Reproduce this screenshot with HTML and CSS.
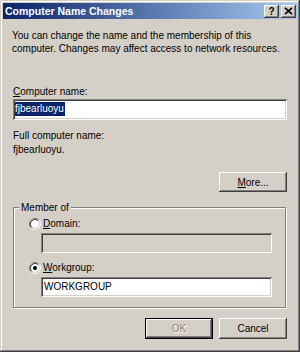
FILE: index.html
```html
<!DOCTYPE html>
<html>
<head>
<meta charset="utf-8">
<link rel="stylesheet" href="styles.css">
</head>
<body>
<div class="window">
  <div class="titlebar">
    <span class="title">Computer Name Changes</span>
    <div class="caption-btns">
      <span class="cbtn help">?</span>
      <span class="cbtn close">
        <svg width="9" height="8" viewBox="0 0 9 8"><path d="M1 0.8 L8 7.2 M8 0.8 L1 7.2" stroke="#000" stroke-width="1.7" fill="none"/></svg>
      </span>
    </div>
  </div>
  <div class="content">
    <p class="desc">You can change the name and the membership of this<br>computer. Changes may affect access to network resources.</p>
    <div class="lbl lbl-name"><u>C</u>omputer name:</div>
    <div class="input input-name"><span class="sel">fjbearluoyu</span></div>
    <div class="lbl lbl-full">Full computer name:</div>
    <div class="lbl lbl-fullval">fjbearluoyu.</div>
    <div class="more-row"><span class="btn"><u>M</u>ore...</span></div>
    <fieldset class="group">
      <legend class="legend">Member of</legend>
      <div class="radio-row">
        <svg class="radio" width="12" height="12" viewBox="0 0 12 12">
          <circle cx="6" cy="6" r="4.5" fill="#fff"/>
          <path d="M2.11 9.89 A5.5 5.5 0 0 1 9.89 2.11" stroke="#808080" fill="none"/>
          <path d="M9.89 2.11 A5.5 5.5 0 0 1 2.11 9.89" stroke="#fff" fill="none"/>
          <path d="M2.82 9.18 A4.5 4.5 0 0 1 9.18 2.82" stroke="#404040" fill="none"/>
          <path d="M9.18 2.82 A4.5 4.5 0 0 1 2.82 9.18" stroke="#d4d0c8" fill="none"/>
        </svg>
        <span><u>D</u>omain:</span>
      </div>
      <div class="input input-group input-disabled"></div>
      <div class="radio-row radio-row-wg">
        <svg class="radio" width="12" height="12" viewBox="0 0 12 12">
          <circle cx="6" cy="6" r="4.5" fill="#fff"/>
          <path d="M2.11 9.89 A5.5 5.5 0 0 1 9.89 2.11" stroke="#808080" fill="none"/>
          <path d="M9.89 2.11 A5.5 5.5 0 0 1 2.11 9.89" stroke="#fff" fill="none"/>
          <path d="M2.82 9.18 A4.5 4.5 0 0 1 9.18 2.82" stroke="#404040" fill="none"/>
          <path d="M9.18 2.82 A4.5 4.5 0 0 1 2.82 9.18" stroke="#d4d0c8" fill="none"/>
          <circle cx="6" cy="6" r="2" fill="#000"/>
        </svg>
        <span><u>W</u>orkgroup:</span>
      </div>
      <div class="input input-group input-wg">WORKGROUP</div>
    </fieldset>
    <div class="actions">
      <span class="btn btn-default btn-disabled">OK</span>
      <span class="btn">Cancel</span>
    </div>
  </div>
</div>
</body>
</html>
```
FILE: styles.css
```css
* { box-sizing: border-box; }
html, body { margin: 0; padding: 0; }
body {
  font-family: "Liberation Sans", Arial, sans-serif;
  font-size: 10px;
  line-height: 13px;
  color: #000;
  background: #d4d0c8;
}
.window {
  width: 300px;
  height: 352px;
  padding: 3px;
  background: #d4d0c8;
  box-shadow: inset -1px -1px #404040, inset 1px 1px #d4d0c8, inset -2px -2px #808080, inset 2px 2px #fff;
  display: flex;
  flex-direction: column;
}
.titlebar {
  height: 16px;
  background: linear-gradient(to right, #0a246a, #a6caf0);
  display: flex;
  align-items: center;
  justify-content: space-between;
  padding: 0 1px 0 2px;
}
.title {
  color: #fff;
  font-weight: bold;
  font-size: 10.5px;
}
.caption-btns {
  display: flex;
  gap: 2px;
}
.cbtn {
  width: 15px;
  height: 13px;
  background: #d4d0c8;
  box-shadow: inset -1px -1px #404040, inset 1px 1px #fff, inset -2px -2px #808080;
  display: flex;
  align-items: center;
  justify-content: center;
  font-weight: bold;
  font-size: 10px;
  line-height: 10px;
}
.help { padding-top: 1px; }
.close svg { display: block; }
.content {
  padding: 10px 10px 0 10px;
  display: flex;
  flex-direction: column;
}
.desc {
  margin: 0 0 0 -1px;
  white-space: nowrap;
}
.lbl-name { margin-top: 30px; }
.input {
  height: 21px;
  background: #fff;
  box-shadow: inset 1px 1px #808080, inset -1px -1px #fff, inset 2px 2px #404040, inset -2px -2px #d4d0c8;
  padding: 3px 3px 0 2px;
  white-space: nowrap;
}
.input-name { margin-top: 1px; }
.sel {
  background: #0a246a;
  color: #fff;
  display: inline-block;
  height: 14px;
  line-height: 14px;
  padding-right: 1px;
}
.lbl-full { margin-top: 9px; }
.lbl-fullval { margin-top: 1px; }
.more-row {
  display: flex;
  justify-content: flex-end;
  margin-top: 16px;
}
.btn {
  width: 68px;
  height: 20px;
  background: #d4d0c8;
  box-shadow: inset -1px -1px #404040, inset 1px 1px #fff, inset -2px -2px #808080;
  display: flex;
  align-items: center;
  justify-content: center;
}
.group {
  margin: 9px 0 0 0;
  padding: 3px 13px 10px 15px;
  border: 1px solid #808080;
  box-shadow: inset 1px 1px #fff, 1px 1px #fff;
  min-width: 0;
  width: 273px;
}
.legend {
  padding: 0 2px;
  margin-left: -10px;
  background: #d4d0c8;
  line-height: 13px;
}
.radio-row {
  display: flex;
  align-items: center;
  gap: 2px;
  height: 13px;
}
.radio { display: block; }
.input-group {
  margin-left: 12px;
  height: 20px;
}
.input-disabled {
  margin-top: 3px;
  background: #d4d0c8;
}
.radio-row-wg { margin-top: 8px; }
.input-wg {
  margin-top: 3px;
  padding-left: 3px;
}
.actions {
  display: flex;
  justify-content: flex-end;
  gap: 6px;
  margin-top: 10px;
}
.actions .btn { height: 21px; }
.btn-default {
  box-shadow: inset 0 0 0 1px #000, inset -2px -2px #404040, inset 2px 2px #fff, inset -3px -3px #808080;
}
.btn-disabled {
  color: #808080;
  text-shadow: 1px 1px #fff;
}
```
